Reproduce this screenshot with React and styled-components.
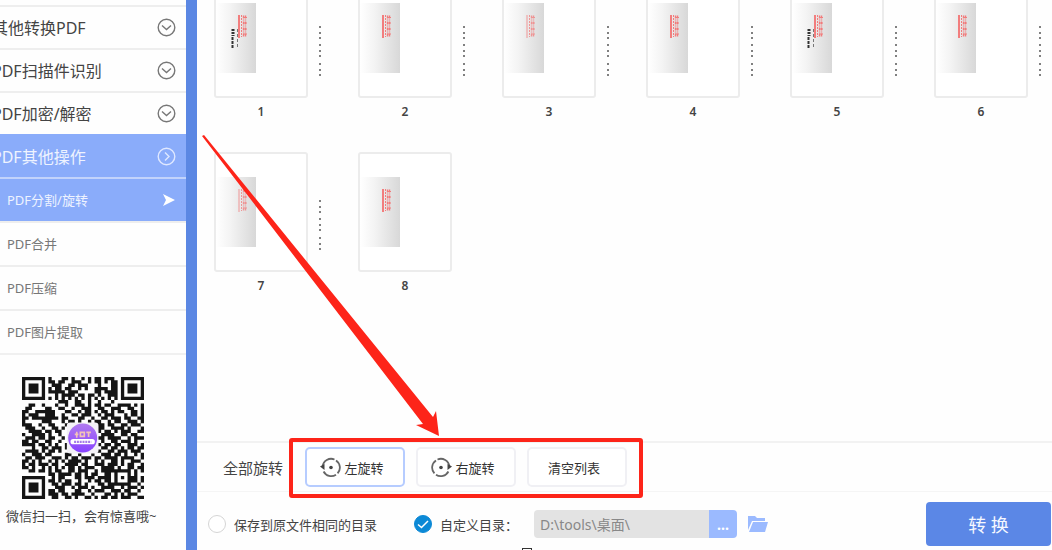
import { useState } from "react";
import styled, { createGlobalStyle, css } from "styled-components";

const GlobalStyle = createGlobalStyle`
  * {
    box-sizing: border-box;
  }
  body {
    margin: 0;
    overflow: hidden;
    background-color: #fefefe;
    color: #444;
    font-family: "Noto Sans", "Noto Sans CJK SC", sans-serif;
  }
  button, input {
    font-family: inherit;
  }
`;

const Layout = styled.div`
  display: flex;
  height: 100vh;
`;
const Sidebar = styled.aside`
  flex: 0 0 197px;
  display: flex;
  flex-direction: column;
  overflow: hidden;
  border-right: 11px solid #5b87e3;
`;
const Menu = styled.nav`
  padding-top: 5px;
`;
const MenuItem = styled.button`
  display: flex;
  align-items: center;
  justify-content: space-between;
  width: 100%;
  padding: 0 10px 0 0;
  border: none;
  border-top: 2px solid #eee;
  background-color: transparent;
  color: #444;
  font-size: 16px;
  line-height: 24px;
  height: 43px;
  white-space: nowrap;
  cursor: pointer;

  span {
    margin-left: -8px;
  }
  ${({ $sub }) =>
    $sub &&
    css`
      height: 44px;
      padding-left: 7px;
      color: #777;
      font-size: 13px;

      span {
        margin-left: 0;
      }
    `}
  ${({ $active }) =>
    $active &&
    css`
      background-color: #8aacfa;
      border-color: ${({ $sub }) => ($sub ? "#c2d3fb" : "#8aacfa")};
      color: #eef3ff;
    `}
`;
const QrPanel = styled.figure`
  margin: 0;
  padding: 22px 0 0 6px;
  border-top: 2px solid #f0f0f0;

  svg {
    display: block;
    margin-left: 16px;
  }
  figcaption {
    margin-top: 7px;
    font-size: 13px;
    line-height: 20px;
    white-space: nowrap;
  }
`;
const Main = styled.main`
  position: relative;
  flex: 1;
  min-width: 0;
  display: flex;
  flex-direction: column;
`;
const Gallery = styled.section`
  flex: 1;
  min-height: 0;
  overflow: hidden;
  padding-left: 17px;
`;
/* the list is scrolled a little past its top edge */
const PageList = styled.ul`
  display: grid;
  grid-template-columns: repeat(auto-fill, 108px);
  gap: 26px 36px;
  margin: -22px 0 0;
  padding: 0;
  list-style: none;
`;
const PageItem = styled.li`
  display: grid;
  grid-template-columns: 94px 4px;
  column-gap: 10px;
`;
const PageCard = styled.div`
  height: 120px;
  padding-top: 23px;
  border: 2px solid #ececec;
  border-radius: 3px;
  background-color: #fff;

  svg {
    display: block;
  }
`;
const PageNumber = styled.span`
  height: 28px;
  font-size: 12px;
  font-weight: 600;
  line-height: 28px;
  text-align: center;
`;
const Toolbar = styled.div`
  display: flex;
  align-items: center;
  height: 51px;
  padding-left: 26px;
  border-top: 2px solid #f2f2f2;
  border-bottom: 1px solid #f5f5f5;
`;
const ToolbarLabel = styled.span`
  width: 82px;
  font-size: 15px;
  white-space: nowrap;
`;
const ButtonGroup = styled.div`
  position: relative;
  display: flex;
  gap: 11px;

  &::after {
    content: "";
    position: absolute;
    inset: -9px -16px -11px;
    border: 4px solid #fd2419;
    border-radius: 3px;
    pointer-events: none;
  }
`;
const ToolButton = styled.button`
  display: flex;
  align-items: center;
  justify-content: center;
  gap: 3px;
  width: 100px;
  height: 40px;
  padding: 0 6px 0 0;
  border: 2px solid ${({ $active }) => ($active ? "#b6ccff" : "#f0f0f4")};
  border-radius: 5px;
  background-color: #fff;
  color: #333;
  font-size: 13px;
  cursor: pointer;
`;
const Footer = styled.footer`
  display: flex;
  align-items: center;
  height: 58px;
  padding: 6px 1px 0 11px;
  font-size: 13px;
  white-space: nowrap;
`;
const Choice = styled.label`
  display: flex;
  align-items: center;
  gap: 8px;
  width: ${({ $width }) => $width};
`;
const Radio = styled.input`
  appearance: none;
  width: 18px;
  height: 18px;
  margin: 0;
  border: 1px solid #d5d5d5;
  border-radius: 50%;
  background-color: #fff;

  &:checked {
    border-color: #0c89d6;
    background: #0c89d6
      url("data:image/svg+xml,%3Csvg xmlns='http://www.w3.org/2000/svg' viewBox='0 0 16 16'%3E%3Cpath d='M3 8.5l3.5 3 6.5-6.5' fill='none' stroke='white' stroke-width='1.5'/%3E%3C/svg%3E")
      center / 16px;
  }
`;
const PathInput = styled.input`
  width: 175px;
  height: 28px;
  padding: 0 6px;
  border: none;
  border-radius: 4px 0 0 4px;
  background-color: #e3e3e3;
  color: #888;
  font-size: 14px;
`;
const BrowseButton = styled.button`
  width: 28px;
  height: 28px;
  padding: 0;
  border: none;
  border-radius: 0 4px 4px 0;
  background-color: #9bbaff;
  color: #fff;
  font-size: 14px;
  font-weight: bold;
`;
const FolderButton = styled.button`
  display: flex;
  margin-left: 11px;
  padding: 0;
  border: none;
  background: none;
`;
const ConvertButton = styled.button`
  width: 125px;
  height: 44px;
  margin-left: auto;
  padding: 0;
  border: none;
  border-radius: 4px;
  background-color: #5b87e6;
  color: #f5f8ff;
  font-size: 18px;
  cursor: pointer;
`;
const Arrow = styled.svg`
  position: absolute;
  top: 134px;
  left: 5px;
  pointer-events: none;
`;
const Handle = styled.span`
  position: absolute;
  bottom: -8px;
  left: 325px;
  width: 10px;
  height: 10px;
  border: 1px solid #333;
  background-color: #fff;
`;

const menuItems = [
  { label: "其他转换PDF" },
  { label: "PDF扫描件识别" },
  { label: "PDF加密/解密" },
  { label: "PDF其他操作", active: true },
  { label: "PDF分割/旋转", active: true, sub: true },
  { label: "PDF合并", sub: true },
  { label: "PDF压缩", sub: true },
  { label: "PDF图片提取", sub: true },
];

const pages = [1, 2, 3, 4, 5, 6, 7, 8];

const qrRows = [
  "1111111010001101001010110111001111111",
  "1000001011011001110010110101101000001",
  "1011101001110011011100010001101011101",
  "1011101010110110010100111101101011101",
  "1011101011111011100000110111101011101",
  "1000001000101111011011010011101000001",
  "1111111010101010101010101010101111111",
  "0000000000011100110010010001000000000",
  "0011001000100100111010110110011110101",
  "0110000110011001001110011001110011001",
  "1100111111000110010110101101011001101",
  "1011100111001001101110010111000101101",
  "1101111111101100011001001101110110011",
  "1000001110001011010010110010110011101",
  "1110010011000100000000111011001101110",
  "0111001001101000000000011001111010001",
  "0011110110110000000000010110101110011",
  "1001111010010000000000001111001101100",
  "0111011011001000000000011011110010111",
  "1101100110010000000000001001101110100",
  "1111011010100100000000110110110011101",
  "0001001101110100000000101101101011011",
  "0111101011010000000000110011011101110",
  "1001110110000110010001001110110100101",
  "0110111001110101101110110111101111001",
  "1101010010101011110100101001101001110",
  "1011011101100111101100111011101011001",
  "1101001010101011010111001111010011011",
  "0011011010110011011100101111111110101",
  "0000000011011110110101100110100010100",
  "1111111001011000110111011110101011101",
  "1000001011010110010010110110100011101",
  "1011101001101110110100011011111110010",
  "1011101000111001011101001111001011101",
  "1011101011011000110010111001110110010",
  "1000001011101101111001000110101011100",
  "1111111001100110100110101101101110011",
];

function QrCode() {
  return (
    <svg
      width="122"
      height="122"
      viewBox="0 0 37 37"
      role="img"
      aria-label="微信二维码"
    >
      <defs>
        <linearGradient id="badge" x2="0" y2="1">
          <stop offset="0" stopColor="#b17af0" />
          <stop offset="1" stopColor="#8742ff" />
        </linearGradient>
      </defs>
      <path
        fill="#151515"
        d={qrRows
          .map((row, y) =>
            [...row]
              .map((bit, x) => (bit === "1" ? `M${x} ${y}h1v1h-1z` : ""))
              .join(""),
          )
          .join("")}
      />
      <rect x="13.6" y="13.8" width="9.6" height="9.4" rx="1" fill="#f3f1f6" />
      <circle cx="18.4" cy="18.5" r="4.4" fill="url(#badge)" />
      <path
        d="M16 17.4h1.1M16.6 16.6v1.8M17.7 16.8h1.2v1.2h-1.2zM19.5 16.8h1.4M20.2 16.6v1.6"
        fill="none"
        stroke="#f3c3b8"
        strokeWidth=".5"
      />
      <rect x="14.7" y="18.8" width="7.4" height="1.6" rx=".8" fill="#fff" />
      <path
        d="M15.8 19.7h5.2"
        stroke="#a47ae8"
        strokeWidth=".7"
        strokeDasharray=".6 .25"
      />
    </svg>
  );
}

function MenuIcon({ active, sub }) {
  if (sub)
    return active ? (
      <svg width="16" height="16" viewBox="0 0 16 16">
        <path d="M3 2l12 6-12 6 3-6z" fill="#fff" />
      </svg>
    ) : null;
  return (
    <svg
      width="19"
      height="19"
      viewBox="0 0 19 19"
      fill="none"
      stroke={active ? "#dfe8ff" : "#777"}
      strokeWidth="1.4"
    >
      <circle cx="9.5" cy="9.5" r="8.3" />
      <path d={active ? "M8 5.5l4 4-4 4" : "M5 7.5l4.5 4 4.5-4"} />
    </svg>
  );
}

function Thumbnail({ number }) {
  const signed = number % 4 === 1;
  const light = number % 4 === 3;
  return (
    <svg width="40" height="70" viewBox="0 0 40 70">
      <defs>
        <linearGradient id={`paper${number}`}>
          <stop offset="0" stopColor="#fff" />
          <stop offset=".35" stopColor="#f4f4f4" />
          <stop offset="1" stopColor="#d8d8d8" />
        </linearGradient>
      </defs>
      <rect width="40" height="70" fill={`url(#paper${number})`} />
      <g stroke="#f46b6b" fill="none" opacity={light ? 0.65 : 0.85}>
        <path d="M23 12v23" strokeWidth={light ? 1 : 2} />
        <path d="M25.5 12v22" strokeWidth="1" strokeDasharray="2 1" />
        <path
          d="M27.5 12.5v21M29.5 12.5v22"
          strokeWidth="1.4"
          strokeDasharray="3 1 1 1"
        />
        <path d="M27 14.5h4M27 20h4M27 26h4M27 31h4" strokeWidth="1" />
      </g>
      {signed && (
        <g stroke="#333" fill="none">
          <path d="M17 26v7" strokeWidth="3" strokeDasharray="2 1" />
          <path d="M16.5 34v11" strokeWidth="2" strokeDasharray="3 1" />
          <path
            d="M21.5 26v20"
            stroke="#777"
            strokeWidth="1"
            strokeDasharray="3 2"
          />
        </g>
      )}
    </svg>
  );
}

function Dots() {
  return (
    <svg width="4" height="120" viewBox="0 0 4 120" fill="#808080">
      {[48, 54, 59, 66, 72, 77, 85, 91, 96].map((y) => (
        <rect key={y} x="1" y={y} width="2" height="2" />
      ))}
    </svg>
  );
}

function RotateIcon({ right }) {
  return (
    <svg width="21" height="21" viewBox="0 0 21 21">
      <g transform={right ? "matrix(-1 0 0 1 21 0)" : undefined}>
        <path
          d="M2.6 9.5A8.6 8.6 0 0 1 14.5 2.5M16 3.4a8.6 8.6 0 0 1 1.6 13M16 17.7A8.6 8.6 0 0 1 3.6 14.5"
          fill="none"
          stroke="#666"
          strokeWidth="1.8"
        />
        <path d="M0 9.5L4.5 7v6z" fill="#444" />
        <circle cx="11" cy="10.5" r="1.8" fill="#444" />
      </g>
    </svg>
  );
}

function App() {
  const [target, setTarget] = useState("custom");
  const [path, setPath] = useState("D:\\tools\\桌面\\");

  return (
    <>
      <GlobalStyle />
      <Layout>
        <Sidebar>
          <Menu>
            {menuItems.map(({ label, active, sub }) => (
              <MenuItem key={label} $active={active} $sub={sub}>
                <span>{label}</span>
                <MenuIcon active={active} sub={sub} />
              </MenuItem>
            ))}
          </Menu>
          <QrPanel>
            <QrCode />
            <figcaption>微信扫一扫，会有惊喜哦~</figcaption>
          </QrPanel>
        </Sidebar>
        <Main>
          <Gallery>
            <PageList>
              {pages.map((number) => (
                <PageItem key={number}>
                  <PageCard>
                    <Thumbnail number={number} />
                  </PageCard>
                  {number < pages.length ? <Dots /> : <i />}
                  <PageNumber>{number}</PageNumber>
                </PageItem>
              ))}
            </PageList>
          </Gallery>
          <Toolbar>
            <ToolbarLabel>全部旋转</ToolbarLabel>
            <ButtonGroup>
              <ToolButton $active>
                <RotateIcon />
                左旋转
              </ToolButton>
              <ToolButton>
                <RotateIcon right />
                右旋转
              </ToolButton>
              <ToolButton>清空列表</ToolButton>
            </ButtonGroup>
          </Toolbar>
          <Footer>
            <Choice $width="206px">
              <Radio
                type="radio"
                name="target"
                checked={target === "same"}
                onChange={() => setTarget("same")}
              />
              保存到原文件相同的目录
            </Choice>
            <Choice $width="120px">
              <Radio
                type="radio"
                name="target"
                checked={target === "custom"}
                onChange={() => setTarget("custom")}
              />
              自定义目录：
            </Choice>
            <PathInput
              aria-label="自定义目录"
              value={path}
              onChange={(e) => setPath(e.target.value)}
            />
            <BrowseButton aria-label="浏览">...</BrowseButton>
            <FolderButton aria-label="打开目录">
              <svg width="20" height="18" viewBox="0 0 20 18" fill="#9bbaff">
                <path d="M0 15V1h7l2 2h8v3H4z" />
                <path d="M5 7h15l-3 10H1z" />
              </svg>
            </FolderButton>
            <ConvertButton>转 换</ConvertButton>
          </Footer>
          <Arrow width="240" height="304" viewBox="0 0 240 304">
            <path
              d="M0 2L2 1L231 283L234 277L237 302L214 291L221 290Z"
              fill="#fd2419"
            />
          </Arrow>
          <Handle />
        </Main>
      </Layout>
    </>
  );
}

export default App;
